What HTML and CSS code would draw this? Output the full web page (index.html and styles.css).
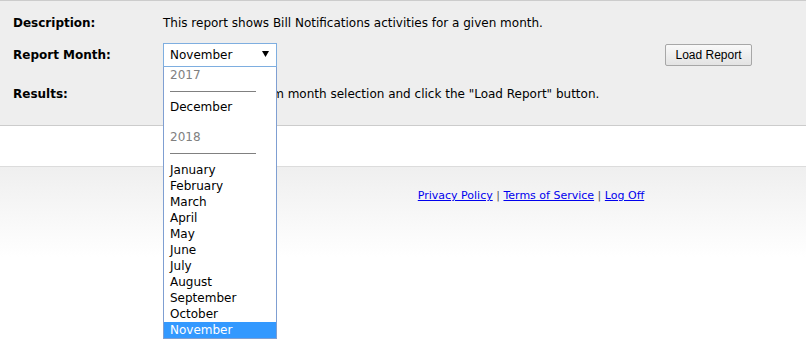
FILE: index.html
```html
<!DOCTYPE html>
<html>
<head>
<meta charset="utf-8">
<link rel="stylesheet" href="styles.css">
</head>
<body>
<div class="panel">
  <div class="row row1">
    <div class="label">Description:</div>
    <div class="value">This report shows Bill Notifications activities for a given month.</div>
  </div>
  <div class="row row2">
    <div class="label">Report Month:</div>
    <div class="value">
      <div class="select-wrap">
        <div class="select">
          <span>November</span>
          <svg class="arrow" width="7" height="6" viewBox="0 0 7 6"><path d="M0 0H7L3.5 6Z" fill="#000"/></svg>
        </div>
        <div class="list">
          <div class="opt grp">2017</div>
          <div class="sep"><span></span></div>
          <div class="opt">December</div>
          <div class="gap"></div>
          <div class="opt grp">2018</div>
          <div class="sep sep2"><span></span></div>
          <div class="opt">January</div>
          <div class="opt">February</div>
          <div class="opt">March</div>
          <div class="opt">April</div>
          <div class="opt">May</div>
          <div class="opt">June</div>
          <div class="opt">July</div>
          <div class="opt">August</div>
          <div class="opt">September</div>
          <div class="opt">October</div>
          <div class="opt sel">November</div>
        </div>
      </div>
    </div>
    <button class="btn">Load Report</button>
  </div>
  <div class="row row3">
    <div class="label">Results:</div>
    <div class="value">Please, choose from month selection and click the "Load Report" button.</div>
  </div>
</div>
<div class="band"></div>
<div class="footer">
  <a href="#">Privacy Policy</a> <span class="bar">|</span> <a href="#">Terms of Service</a> <span class="bar">|</span> <a href="#">Log Off</a>
</div>
</body>
</html>
```
FILE: styles.css
```css
html, body {
  margin: 0;
  padding: 0;
  background: #fff;
}
body {
  font-family: "DejaVu Sans", Verdana, sans-serif;
  font-size: 12px;
  color: #000;
  width: 806px;
  height: 356px;
  overflow: hidden;
}
.panel {
  background: #eeeeee;
  border-top: 1px solid #cccccc;
  border-bottom: 1px solid #cccccc;
  box-sizing: border-box;
  height: 126px;
  padding: 15px 0 0 13px;
  display: flex;
  flex-direction: column;
}
.row {
  display: flex;
  align-items: center;
  line-height: 15px;
}
.row1 { height: 15px; }
.row2 { height: 24px; margin-top: 12px; }
.row3 { height: 15px; margin-top: 20px; }
.label {
  width: 150px;
  font-weight: bold;
  flex: none;
}
.value {
  white-space: nowrap;
}
.select-wrap {
  position: relative;
  width: 114px;
  height: 24px;
}
.select {
  box-sizing: border-box;
  width: 114px;
  height: 24px;
  border: 1px solid #7eaee0;
  background: #fff;
  display: flex;
  align-items: center;
  justify-content: space-between;
  padding: 0 7px 0 6px;
}
.arrow { display: block; margin-top: -2px; }
.list {
  position: absolute;
  left: 0;
  top: 24px;
  width: 114px;
  box-sizing: border-box;
  border: 1px solid #7f9fd2;
  border-top: none;
  background: #fff;
  z-index: 5;
}
.opt {
  height: 16px;
  line-height: 16px;
  padding-left: 6px;
  white-space: nowrap;
}
.grp { color: #808080; }
.sep {
  height: 16px;
  display: flex;
  align-items: center;
  padding-left: 6px;
}
.sep2 { height: 17px; }
.sep span {
  display: block;
  width: 86px;
  height: 1px;
  background: #808080;
}
.gap { height: 14px; }
.sel {
  background: #3399ff;
  color: #fff;
}
.btn {
  font-family: "Liberation Sans", Arial, sans-serif;
  font-size: 12px;
  height: 22px;
  width: 87px;
  padding: 0;
  margin-left: 388px;
  border: 1px solid #a7a7a7;
  border-radius: 2px;
  background: linear-gradient(#f9f9f9, #e3e3e3);
  color: #000;
}
.band {
  height: 40px;
  border-bottom: 1px solid #dcdcdc;
  background: #fff;
}
.footer {
  background: linear-gradient(#efefef, #ffffff 90px);
  height: 189px;
  box-sizing: border-box;
  padding: 22px 0 0 256px;
  text-align: center;
  font-size: 11px;
  line-height: 14px;
}
.footer a { color: #0000ee; }
.bar { color: #555; }
```
